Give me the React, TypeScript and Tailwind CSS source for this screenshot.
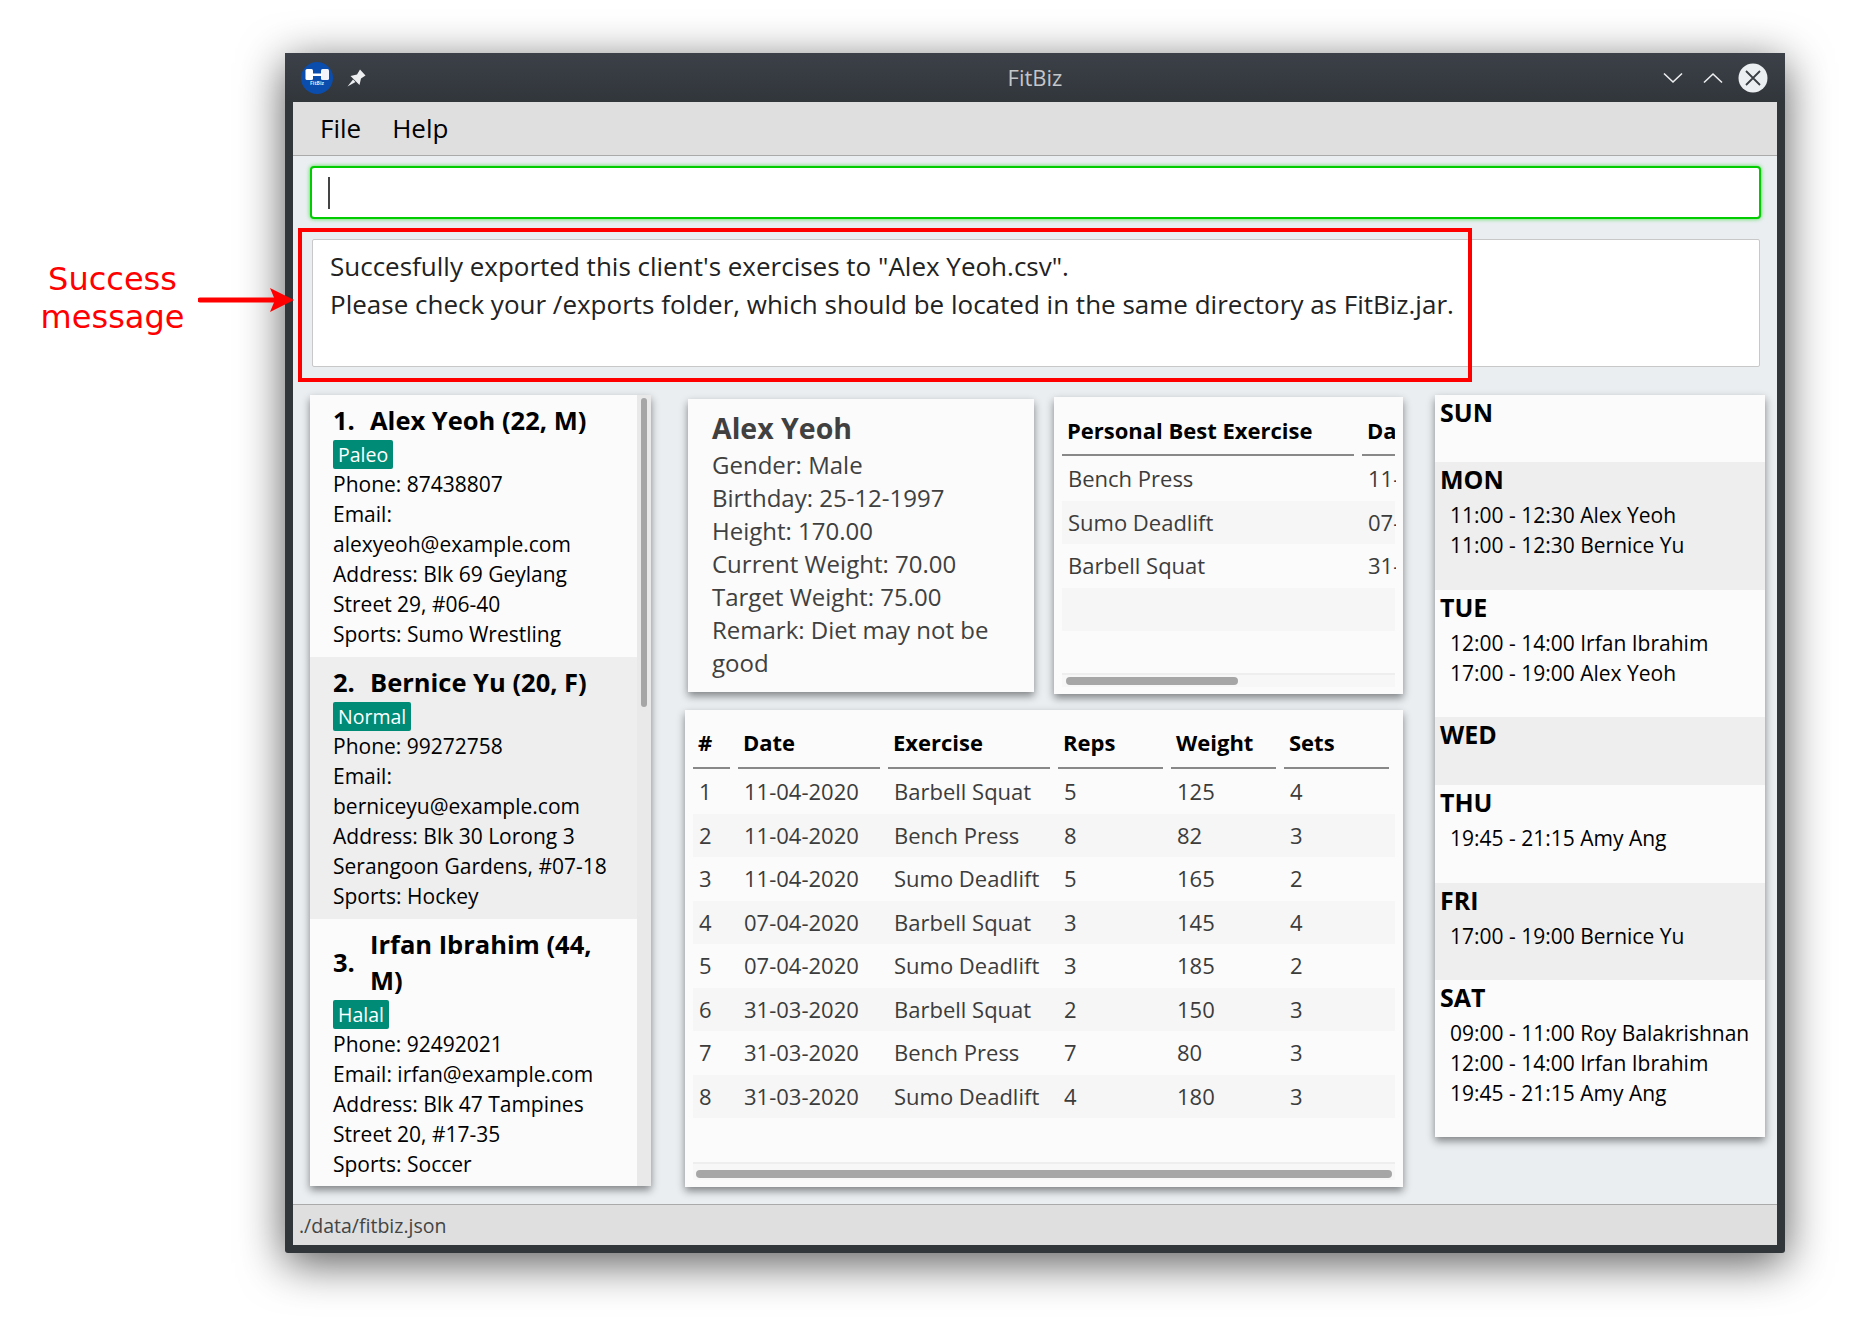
const clients = [
  {
    index: "1.",
    name: "Alex Yeoh (22, M)",
    tag: "Paleo",
    lines: ["Phone: 87438807", "Email:", "alexyeoh@example.com", "Address: Blk 69 Geylang", "Street 29, #06-40", "Sports: Sumo Wrestling"],
  },
  {
    index: "2.",
    name: "Bernice Yu (20, F)",
    tag: "Normal",
    lines: ["Phone: 99272758", "Email:", "berniceyu@example.com", "Address: Blk 30 Lorong 3", "Serangoon Gardens, #07-18", "Sports: Hockey"],
  },
  {
    index: "3.",
    name: "Irfan Ibrahim (44, M)",
    tag: "Halal",
    lines: ["Phone: 92492021", "Email: irfan@example.com", "Address: Blk 47 Tampines", "Street 20, #17-35", "Sports: Soccer"],
  },
];

const details = ["Gender: Male", "Birthday: 25-12-1997", "Height: 170.00", "Current Weight: 70.00", "Target Weight: 75.00", "Remark: Diet may not be good"];

const bests = [
  ["Bench Press", "11-"],
  ["Sumo Deadlift", "07-"],
  ["Barbell Squat", "31-"],
];

const headers = ["#", "Date", "Exercise", "Reps", "Weight", "Sets"];
const exercises = [
  ["1", "11-04-2020", "Barbell Squat", "5", "125", "4"],
  ["2", "11-04-2020", "Bench Press", "8", "82", "3"],
  ["3", "11-04-2020", "Sumo Deadlift", "5", "165", "2"],
  ["4", "07-04-2020", "Barbell Squat", "3", "145", "4"],
  ["5", "07-04-2020", "Sumo Deadlift", "3", "185", "2"],
  ["6", "31-03-2020", "Barbell Squat", "2", "150", "3"],
  ["7", "31-03-2020", "Bench Press", "7", "80", "3"],
  ["8", "31-03-2020", "Sumo Deadlift", "4", "180", "3"],
];

const schedule = [
  { day: "SUN", height: "h-[67px]", items: [] as string[] },
  { day: "MON", height: "h-[128px]", items: ["11:00 - 12:30 Alex Yeoh", "11:00 - 12:30 Bernice Yu"] },
  { day: "TUE", height: "h-[127px]", items: ["12:00 - 14:00 Irfan Ibrahim", "17:00 - 19:00 Alex Yeoh"] },
  { day: "WED", height: "h-[68px]", items: [] as string[] },
  { day: "THU", height: "h-[98px]", items: ["19:45 - 21:15 Amy Ang"] },
  { day: "FRI", height: "h-[97px]", items: ["17:00 - 19:00 Bernice Yu"] },
  { day: "SAT", height: "h-[157px]", items: ["09:00 - 11:00 Roy Balakrishnan", "12:00 - 14:00 Irfan Ibrahim", "19:45 - 21:15 Amy Ang"] },
];

function Logo() {
  return (
    <div className="relative h-[32px] w-[32px] rounded-full bg-[#0b4dad]">
      <svg viewBox="0 0 32 32" className="absolute inset-0 h-full w-full">
        <rect x="4.5" y="7" width="7.5" height="11" rx="1.5" fill="#fff" />
        <rect x="20" y="7" width="8" height="11" rx="1.5" fill="#fff" opacity="0.95" />
        <rect x="11" y="11.5" width="10" height="2.5" fill="#fff" />
      </svg>
      <span className="absolute left-0 right-0 top-[18px] text-center text-[5px] font-bold leading-[7px] text-[#dfe8f6]">FitBiz</span>
    </div>
  );
}

function PinIcon() {
  return (
    <svg viewBox="0 0 20 18" className="h-[18px] w-[20px]">
      <path d="M13 .5 18.5 6.5 14 9.5 12.5 16 3.5 7 10 5.5Z" fill="#eceeef" />
      <path d="M.5 17.5 6 10.5 8.5 13Z" fill="#eceeef" />
    </svg>
  );
}

function TitleBar() {
  return (
    <div className="relative flex h-[49px] items-center justify-between bg-gradient-to-b from-[#3c4048] to-[#31363b] pl-[16px]">
      <div className="flex items-center">
        <Logo />
        <div className="ml-[14px]">
          <PinIcon />
        </div>
      </div>
      <div className="absolute inset-x-0 top-0 text-center text-[22px] leading-[49px] text-[#c4c6c8]">FitBiz</div>
      <div className="relative flex items-center pr-[17px]">
        <svg viewBox="0 0 20 12" className="mr-[20px] h-[12px] w-[20px]" fill="none" stroke="#eceeef" strokeWidth="1.6">
          <path d="M1 1.5 10 10 19 1.5" />
        </svg>
        <svg viewBox="0 0 20 12" className="mr-[15px] h-[12px] w-[20px]" fill="none" stroke="#eceeef" strokeWidth="1.6">
          <path d="M1 10.5 10 2 19 10.5" />
        </svg>
        <svg viewBox="0 0 30 30" className="h-[30px] w-[30px]">
          <circle cx="15" cy="15" r="14.5" fill="#eceff1" />
          <path d="M8 8 22 22M22 8 8 22" stroke="#3a3f45" strokeWidth="1.8" />
        </svg>
      </div>
    </div>
  );
}

function ClientCard({ client, shaded }: { client: (typeof clients)[number]; shaded: boolean }) {
  return (
    <div className={`px-[23px] pt-[7px] pb-[8px] ${shaded ? "bg-[#eeeeee]" : "bg-[#fbfbfb]"}`}>
      <div className="flex items-center text-[25.5px] font-bold leading-[36px] text-black">
        <span className="w-[37px] shrink-0">{client.index}</span>
        <span>{client.name}</span>
      </div>
      <div className="mt-[2px] flex">
        <span className="rounded-[2px] bg-[#008b76] px-[5px] text-[19.5px] leading-[29px] text-white">{client.tag}</span>
      </div>
      {client.lines.map((line) => (
        <div key={line} className="text-[21px] leading-[30px] text-black">
          {line}
        </div>
      ))}
    </div>
  );
}

function ClientList() {
  return (
    <div className="relative flex h-[791px] w-[341px] shrink-0 shadow-[0_4px_8px_rgba(0,0,0,0.45)]">
      <div className="w-[327px] overflow-hidden">
        {clients.map((client, i) => (
          <ClientCard key={client.index} client={client} shaded={i === 1} />
        ))}
      </div>
      <div className="w-[14px] bg-[#e9e9e9] px-[4px] pt-[3px]">
        <div className="h-[309px] rounded-full bg-[#a6a6a6]" />
      </div>
    </div>
  );
}

function DetailsCard() {
  return (
    <div className="ml-[3px] mt-[2px] h-[293px] w-[346px] bg-[#fbfbfb] pl-[24px] pr-[20px] pt-[11px] text-[#404040] shadow-[0_4px_8px_rgba(0,0,0,0.45)]">
      <div className="text-[28.5px] font-bold leading-[36px]">Alex Yeoh</div>
      <div className="mt-[2px] text-[24px] leading-[33px]">
        {details.map((line) => (
          <div key={line}>{line}</div>
        ))}
      </div>
    </div>
  );
}

function PersonalBests() {
  return (
    <div className="ml-[20px] h-[297px] w-[349px] bg-[#fbfbfb] px-[8px] shadow-[0_4px_8px_rgba(0,0,0,0.45)]">
      <div className="mb-[1px] flex h-[59px] overflow-hidden text-[22px] font-bold leading-[66px] text-black">
        <div className="w-[292px] shrink-0 border-b-2 border-[#888888] pl-[5px]">Personal Best Exercise</div>
        <div className="ml-[8px] w-[33px] shrink-0 overflow-hidden border-b-2 border-[#888888] pl-[5px]">Date</div>
      </div>
      {[...bests, ["", ""]].map(([name, date], i) => (
        <div key={i} className={`flex h-[43.5px] text-[22px] leading-[43.5px] text-[#3c3c3c] ${i % 2 === 1 ? "bg-[#f6f6f6]" : ""}`}>
          <div className="w-[300px] shrink-0 pl-[6px]">{name}</div>
          <div className="w-[34px] shrink-0 overflow-hidden pl-[6px]">{date}</div>
        </div>
      ))}
      <div className="mt-[42px] h-[14px] border-t-2 border-[#eeeeee] bg-[#f7f7f7] px-[4px] pt-[2px]">
        <div className="h-[8px] w-[172px] rounded-full bg-[#a6a6a6]" />
      </div>
    </div>
  );
}

function ExerciseTable() {
  return (
    <div className="mt-[16px] h-[477px] w-[718px] bg-[#fbfbfb] px-[8px] shadow-[0_4px_8px_rgba(0,0,0,0.45)]">
      <div className="mb-[1px] grid h-[59px] grid-cols-[45px_150px_170px_113px_113px_113px] text-[22px] font-bold leading-[65px] text-black">
        {headers.map((h) => (
          <div key={h} className="mr-[8px] overflow-hidden border-b-2 border-[#888888] pl-[5px]">
            {h}
          </div>
        ))}
      </div>
      <div className="h-[348px]">
        {exercises.map((row, i) => (
          <div
            key={row[0]}
            className={`grid h-[43.5px] grid-cols-[45px_150px_170px_113px_113px_113px] text-[22px] leading-[43.5px] text-[#3c3c3c] ${i % 2 === 1 ? "bg-[#f6f6f6]" : ""}`}
          >
            {row.map((cell, j) => (
              <div key={j} className="pl-[6px]">
                {cell}
              </div>
            ))}
          </div>
        ))}
      </div>
      <div className="mt-[44px] h-[18px] border-t-2 border-[#eeeeee] bg-[#f7f7f7] px-[3px] pt-[6px]">
        <div className="h-[8px] rounded-full bg-[#a6a6a6]" />
      </div>
    </div>
  );
}

function Schedule() {
  return (
    <div className="ml-[32px] w-[330px] self-start shadow-[0_4px_8px_rgba(0,0,0,0.45)]">
      {schedule.map((entry, i) => (
        <div key={entry.day} className={`${entry.height} px-[5px] ${i % 2 === 1 ? "bg-[#eeeeee]" : "bg-[#fbfbfb]"}`}>
          <div className="text-[25px] font-bold leading-[35px] text-black">{entry.day}</div>
          <div className="mt-[3px]">
            {entry.items.map((item) => (
              <div key={item} className="pl-[10px] text-[21px] leading-[30px] text-black">
                {item}
              </div>
            ))}
          </div>
        </div>
      ))}
    </div>
  );
}

export default function App() {
  return (
    <div className="relative h-[1330px] w-[1850px] overflow-hidden bg-white pl-[285px] pt-[53px] font-['Open_Sans',sans-serif]">
      <div className="h-[1200px] w-[1500px] rounded-[3px] bg-[#31363b] shadow-[0_10px_45px_rgba(0,0,0,0.65)]">
        <TitleBar />
        <div className="mx-[8px] flex h-[1143px] flex-col bg-[#eaeef1]">
          <div className="flex h-[54px] shrink-0 items-center gap-[31px] border-b border-[#aaaaaa] bg-[#dfdfdf] pl-[27px] text-[26px] text-black">
            <span>File</span>
            <span>Help</span>
          </div>
          <div className="ml-[17px] mr-[16px] mt-[10px] flex h-[53px] shrink-0 items-center rounded-[4px] border-2 border-[#00cc00] bg-white pl-[16px] shadow-[0_0_4px_rgba(0,210,0,0.7)]">
            <div className="h-[32px] w-[2px] bg-[#444444]" />
          </div>
          <div className="ml-[19px] mr-[17px] mt-[20px] h-[128px] shrink-0 rounded-[2px] border border-[#c8c8c8] bg-white pl-[17px] pt-[7px] text-[26px] leading-[38px] text-[#222222]">
            <div>Succesfully exported this client's exercises to "Alex Yeoh.csv".</div>
            <div>Please check your /exports folder, which should be located in the same directory as FitBiz.jar.</div>
          </div>
          <div className="flex h-[837px] items-start pl-[17px] pt-[28px]">
            <ClientList />
            <div className="ml-[34px] mt-[2px] w-[718px]">
              <div className="flex">
                <DetailsCard />
                <PersonalBests />
              </div>
              <ExerciseTable />
            </div>
            <Schedule />
          </div>
          <div className="flex h-[41px] shrink-0 items-center border-t border-[#aaaaaa] bg-[#dfdfdf] pl-[6px] pt-[1px] text-[19.5px] text-[#444444]">
            ./data/fitbiz.json
          </div>
        </div>
      </div>
      <div className="absolute left-[298px] top-[228px] h-[154px] w-[1174px] border-[4px] border-[#ff0000]" />
      <div className="absolute left-[30px] top-[260px] w-[165px] text-center font-['DejaVu_Sans',sans-serif] text-[32px] leading-[38px] text-[#ff0000]">
        Success
        <br />
        message
      </div>
      <svg viewBox="0 0 96 28" className="absolute left-[198px] top-[286px] h-[28px] w-[96px]">
        <path d="M2 14H84" stroke="#ff0000" strokeWidth="5" strokeLinecap="round" />
        <path d="M72 2 96 14 72 26 77 14Z" fill="#ff0000" />
      </svg>
    </div>
  );
}
